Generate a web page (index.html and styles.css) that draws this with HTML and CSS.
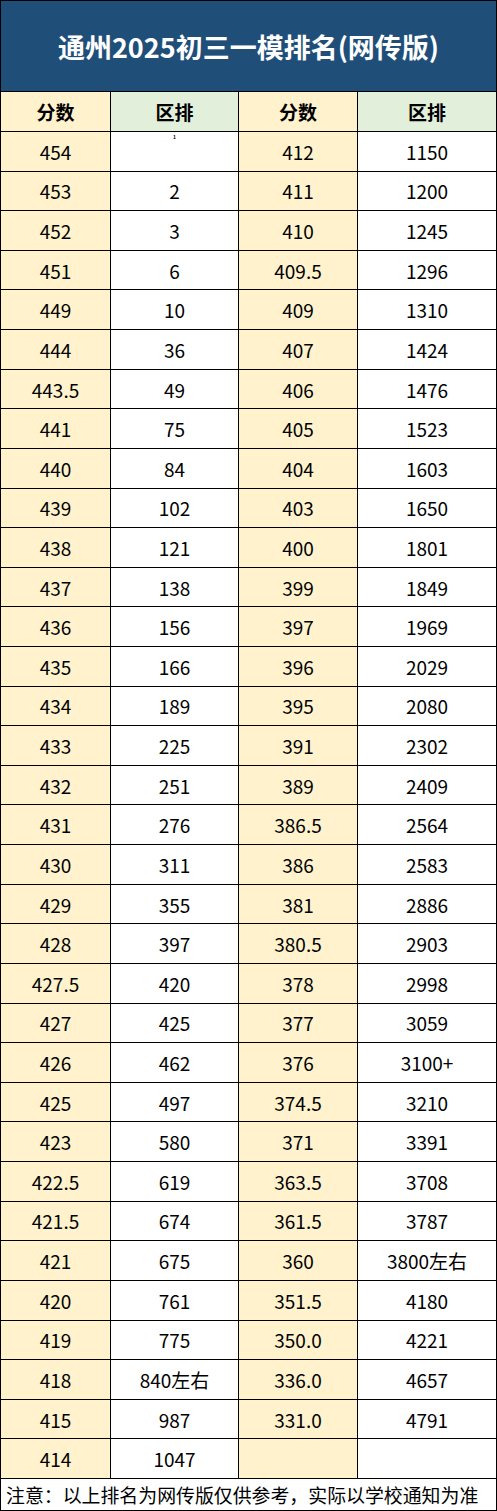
FILE: index.html
```html
<!DOCTYPE html>
<html lang="zh-CN">
<head>
<meta charset="utf-8">
<title>通州2025初三一模排名(网传版)</title>
<link rel="stylesheet" href="styles.css">
</head>
<body>
<div class="sheet">
  <div class="title">通州2025初三一模排名(网传版)</div>
  <div class="grid">
    <div class="hs">分数</div><div class="hr">区排</div><div class="hs">分数</div><div class="hr">区排</div>
    <div class="s">454</div><div class="r tiny"><span>1</span></div><div class="s">412</div><div class="r">1150</div>
    <div class="s">453</div><div class="r">2</div><div class="s">411</div><div class="r">1200</div>
    <div class="s">452</div><div class="r">3</div><div class="s">410</div><div class="r">1245</div>
    <div class="s">451</div><div class="r">6</div><div class="s">409.5</div><div class="r">1296</div>
    <div class="s">449</div><div class="r">10</div><div class="s">409</div><div class="r">1310</div>
    <div class="s">444</div><div class="r">36</div><div class="s">407</div><div class="r">1424</div>
    <div class="s">443.5</div><div class="r">49</div><div class="s">406</div><div class="r">1476</div>
    <div class="s">441</div><div class="r">75</div><div class="s">405</div><div class="r">1523</div>
    <div class="s">440</div><div class="r">84</div><div class="s">404</div><div class="r">1603</div>
    <div class="s">439</div><div class="r">102</div><div class="s">403</div><div class="r">1650</div>
    <div class="s">438</div><div class="r">121</div><div class="s">400</div><div class="r">1801</div>
    <div class="s">437</div><div class="r">138</div><div class="s">399</div><div class="r">1849</div>
    <div class="s">436</div><div class="r">156</div><div class="s">397</div><div class="r">1969</div>
    <div class="s">435</div><div class="r">166</div><div class="s">396</div><div class="r">2029</div>
    <div class="s">434</div><div class="r">189</div><div class="s">395</div><div class="r">2080</div>
    <div class="s">433</div><div class="r">225</div><div class="s">391</div><div class="r">2302</div>
    <div class="s">432</div><div class="r">251</div><div class="s">389</div><div class="r">2409</div>
    <div class="s">431</div><div class="r">276</div><div class="s">386.5</div><div class="r">2564</div>
    <div class="s">430</div><div class="r">311</div><div class="s">386</div><div class="r">2583</div>
    <div class="s">429</div><div class="r">355</div><div class="s">381</div><div class="r">2886</div>
    <div class="s">428</div><div class="r">397</div><div class="s">380.5</div><div class="r">2903</div>
    <div class="s">427.5</div><div class="r">420</div><div class="s">378</div><div class="r">2998</div>
    <div class="s">427</div><div class="r">425</div><div class="s">377</div><div class="r">3059</div>
    <div class="s">426</div><div class="r">462</div><div class="s">376</div><div class="r">3100+</div>
    <div class="s">425</div><div class="r">497</div><div class="s">374.5</div><div class="r">3210</div>
    <div class="s">423</div><div class="r">580</div><div class="s">371</div><div class="r">3391</div>
    <div class="s">422.5</div><div class="r">619</div><div class="s">363.5</div><div class="r">3708</div>
    <div class="s">421.5</div><div class="r">674</div><div class="s">361.5</div><div class="r">3787</div>
    <div class="s">421</div><div class="r">675</div><div class="s">360</div><div class="r">3800左右</div>
    <div class="s">420</div><div class="r">761</div><div class="s">351.5</div><div class="r">4180</div>
    <div class="s">419</div><div class="r">775</div><div class="s">350.0</div><div class="r">4221</div>
    <div class="s">418</div><div class="r">840左右</div><div class="s">336.0</div><div class="r">4657</div>
    <div class="s">415</div><div class="r">987</div><div class="s">331.0</div><div class="r">4791</div>
    <div class="s">414</div><div class="r">1047</div><div class="s"></div><div class="r"></div>
  </div>
  <div class="note">注意：以上排名为网传版仅供参考，实际以学校通知为准</div>
</div>
</body>
</html>
```

FILE: styles.css
```css
* { box-sizing: border-box; }
html, body { margin: 0; padding: 0; background: #fff; }
body {
  font-family: "Noto Sans CJK SC", "Noto Sans", sans-serif;
  color: #000;
}
.sheet {
  width: 497px;
  display: flex;
  flex-direction: column;
}
.title {
  height: 91px;
  background: #1f4e79;
  border: 1px solid #000;
  border-bottom: none;
  color: #fff;
  font-weight: 700;
  font-size: 27px;
  display: flex;
  align-items: center;
  justify-content: center;
  letter-spacing: 0;
}
.grid {
  height: 1387px;
  display: grid;
  grid-template-columns: 109px 127px 118px 138px;
  grid-template-rows: 39px repeat(34, 1fr);
  gap: 1px;
  padding: 1px 1px 0 1px;
  background: #000;
}
.grid > div {
  display: flex;
  align-items: center;
  justify-content: center;
  font-size: 19px;
  line-height: 1;
}
.hs, .hr { font-weight: 700; font-size: 19px; }
.hs { background: #fff2cc; }
.hr { background: #e2efda; }
.s { background: #fff2cc; }
.r { background: #fff; }
.grid > .tiny {
  align-items: flex-start;
  padding-top: 2px;
}
.tiny span { font-size: 5px; font-weight: 700; }
.note {
  height: 33px;
  border: 1px solid #000;
  padding-left: 5px;
  font-size: 18.9px;
  display: flex;
  align-items: center;
  white-space: nowrap;
}
```
